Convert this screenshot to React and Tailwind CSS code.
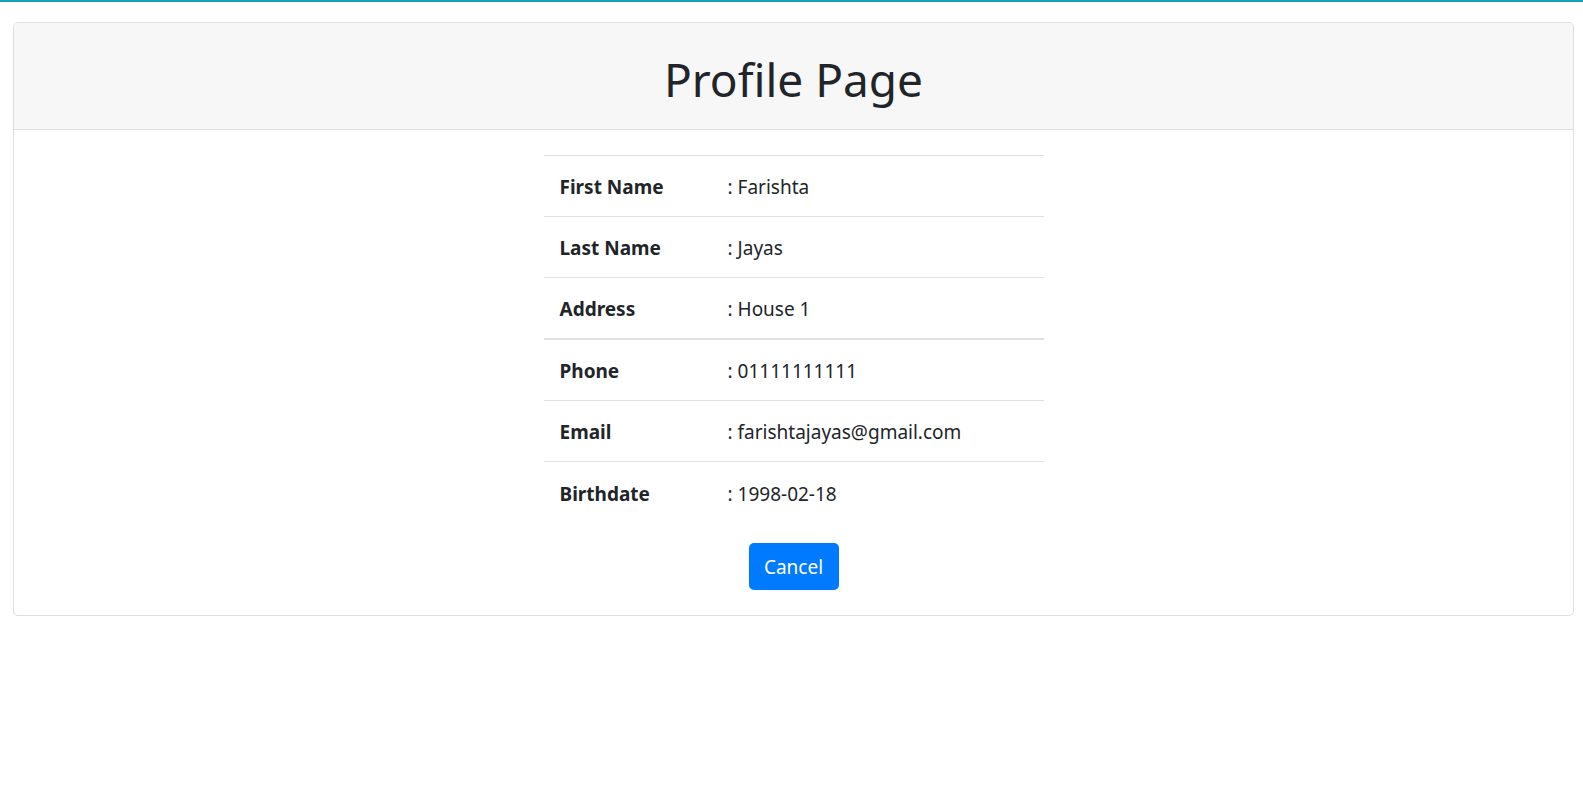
import React from 'react';

const rows = [
  { label: 'First Name', value: 'Farishta' },
  { label: 'Last Name', value: 'Jayas' },
  { label: 'Address', value: 'House 1' },
  { label: 'Phone', value: '01111111111', thick: true },
  { label: 'Email', value: 'farishtajayas@gmail.com' },
  { label: 'Birthdate', value: '1998-02-18' },
];

export default function App() {
  return (
    <div className="min-h-screen bg-white text-[#212529] font-['Noto_Sans','Open_Sans',sans-serif]">
      <div className="h-[2px] bg-[#17a2b8]" />
      <div className="pl-[13px] pr-[9px] pt-[20px]">
        <div className="border border-[#dfdfdf] rounded-[5px] overflow-hidden">
          {/* header */}
          <div className="bg-[#f7f7f7] border-b border-[#dfdfdf] h-[107px] flex items-center justify-center">
            <h1 className="text-[46px] leading-[60px] font-normal pt-[5px]">Profile Page</h1>
          </div>

          {/* body */}
          <div className="p-[25px] flex flex-col items-center">
            <table className="w-[500px] border-collapse text-[19px]">
              <tbody>
                {rows.map((r) => (
                  <tr
                    key={r.label}
                    className={r.thick ? 'border-t-2 border-[#dee2e6] h-[62px]' : 'border-t border-[#dee2e6] h-[61px]'}
                  >
                    <td className="w-[170px] pl-[16px] pt-[3px] font-bold align-middle">{r.label}</td>
                    <td className="pl-[14px] pt-[3px] align-middle">: {r.value}</td>
                  </tr>
                ))}
              </tbody>
            </table>

            <button
              type="button"
              className="mt-[20px] w-[90px] h-[47px] rounded-[5px] bg-[#007bff] text-white text-[19px] leading-[30px] pt-[2px]"
            >
              Cancel
            </button>
          </div>
        </div>
      </div>
    </div>
  );
}
